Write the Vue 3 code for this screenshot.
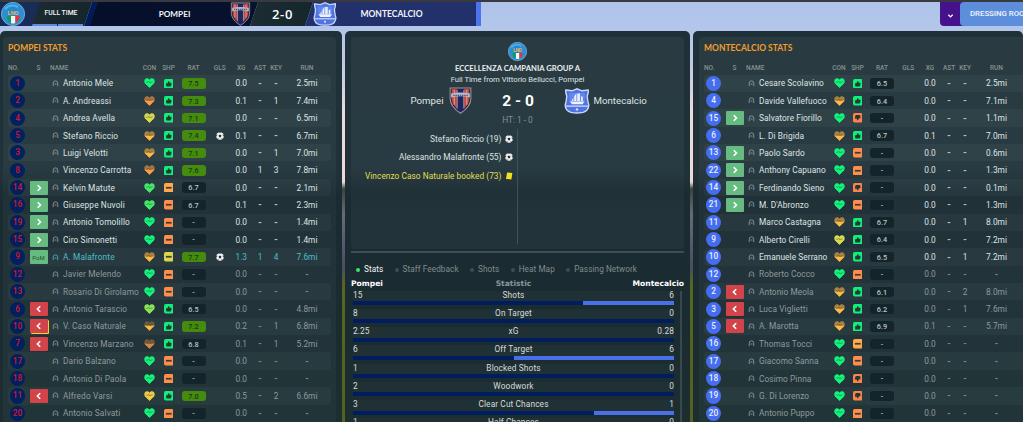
<template>
  <div class="match-screen">
    <!-- Score bar -->
    <header class="top-bar">
      <div class="league-cell">
        <svg class="league-logo" viewBox="0 0 24 24">
          <use href="#league-badge" />
        </svg>
      </div>
      <div class="time-cell">
        <span>FULL TIME</span>
        <div class="time-progress"><i></i><i></i></div>
      </div>
      <div class="home-cell">
        <span class="team-title">POMPEI</span>
      </div>
      <div class="score-cell">2-0</div>
      <div class="away-cell">
        <span class="team-title">MONTECALCIO</span>
      </div>
      <svg class="bar-crest home-crest" viewBox="0 0 22 26"><use href="#pompei-crest" /></svg>
      <svg class="bar-crest away-crest" viewBox="0 0 26 26"><use href="#monte-crest" /></svg>
      <div class="actions">
        <button class="drop-btn">
          <svg viewBox="0 0 8 6"><path d="M1.5 1.5 L4 4 L6.5 1.5" fill="none" stroke="#fff" stroke-width="1.5" /></svg>
        </button>
        <button class="room-btn">DRESSING ROOM</button>
      </div>
    </header>

    <main class="panels">
      <section
        v-for="team in teams"
        :key="team.title"
        :class="['panel', 'team-panel', team.side]"
      >
        <div class="card">
          <h2>{{ team.title }}</h2>
          <div class="grid-row grid-head">
            <span class="left">NO.</span><span>S</span><span class="name-head">NAME</span><span></span>
            <span>CON</span><span>SHP</span><span>RAT</span><span>GLS</span>
            <span>XG</span><span>AST</span><span>KEY</span><span>RUN</span>
          </div>
          <div
            v-for="p in team.players"
            :key="p.no"
            :class="['grid-row', 'player', { dim: p.dim, pom: p.sub === 'pom' }]"
          >
            <span><b class="shirt">{{ p.no }}</b></span>
            <span>
              <b v-if="p.sub === 'pom'" class="sub on pom-tag">PoM</b>
              <b v-else-if="p.sub" :class="['sub', p.sub, { booked: p.booked }]">
                <svg viewBox="0 0 8 8">
                  <path :d="p.sub === 'on' ? 'M2.7 1.2 L5.5 4 L2.7 6.8' : 'M5.2 1.2 L2.4 4 L5.2 6.8'" />
                </svg>
              </b>
            </span>
            <span>
              <svg class="person" viewBox="0 0 8 8">
                <path d="M1.4 7 V3.6 A2.6 2.6 0 0 1 6.6 3.6 V7" />
                <path d="M2.8 4.6 H5.2" />
              </svg>
            </span>
            <span class="name">{{ p.name }}</span>
            <span>
              <svg class="heart" viewBox="0 0 12 11">
                <path :fill="hearts[p.con][0]" d="M6 10.8 L1 5.8 C-.6 3.6 .6 .4 3.2 .4 C4.7 .4 5.6 1.2 6 2 C6.4 1.2 7.3 .4 8.8 .4 C11.4 .4 12.6 3.6 11 5.8 Z" />
                <path :fill="hearts[p.con][1]" d="M.5 5 L11.5 5 L11 5.8 L6 10.8 L1 5.8 Z" />
                <path d="M2.4 4.8 L4.4 4.5 L5.4 3.6 L6.5 5.5 L7.5 4.5 L9.5 4.4" fill="none" stroke="#30463e" stroke-opacity=".7" stroke-width=".7" />
              </svg>
            </span>
            <span>
              <svg class="sharp" viewBox="0 0 10 10">
                <rect width="10" height="10" rx="1.8" :fill="sharpness[p.shp]" />
                <path
                  v-if="p.shp === 'up' || p.shp === 'down'"
                  :transform="p.shp === 'down' ? 'rotate(180 5 5)' : ''"
                  d="M2.2 4.6 H3.5 L5 2 Q6.1 2 5.8 3.9 H7.8 V6.4 L7 8 H3.6 L2.2 7.5 Z"
                  fill="#22383a"
                />
                <rect v-else x="2" y="4.1" width="6" height="1.8" fill="#3b3a35" />
              </svg>
            </span>
            <span><b :class="['rating', { good: Number(p.rat) >= 7 }]">{{ p.rat }}</b></span>
            <span>
              <svg v-if="p.goal" class="ball" viewBox="0 0 10 10"><use href="#ball" /></svg>
            </span>
            <span>{{ p.xg }}</span>
            <span :class="{ dash: p.ast === '-' }">{{ p.ast }}</span>
            <span :class="{ dash: p.key === '-' }">{{ p.key }}</span>
            <span :class="{ dash: p.run === '-' }">{{ p.run }}</span>
          </div>
        </div>
      </section>

      <!-- Match summary -->
      <section class="panel centre-panel">
        <div class="card summary">
          <svg class="summary-logo" viewBox="0 0 24 24"><use href="#league-badge" /></svg>
          <h3>ECCELLENZA CAMPANIA GROUP A</h3>
          <p class="venue">Full Time from Vittorio Bellucci, Pompei</p>
          <div class="result">
            <div class="result-side home"><span>Pompei</span><svg class="crest-p" viewBox="0 0 22 26"><use href="#pompei-crest" /></svg></div>
            <strong>2 - 0</strong>
            <div class="result-side away"><svg class="crest-m" viewBox="0 0 26 26"><use href="#monte-crest" /></svg><span>Montecalcio</span></div>
          </div>
          <p class="half-time">HT: 1 - 0</p>
          <div class="events">
            <div class="home-events">
              <div v-for="e in events" :key="e.text" :class="['event', { booking: e.card }]">
                <span>{{ e.text }}</span>
                <svg v-if="e.card" viewBox="0 0 10 10"><path d="M2.6 .6 L9.2 1.4 L8 9.4 L1.2 8.6 Z" fill="#f5e11b" /></svg>
                <svg v-else viewBox="0 0 10 10"><use href="#ball" /></svg>
              </div>
            </div>
          </div>
        </div>
        <div class="divider"></div>
        <nav class="tabs">
          <a v-for="(tab, i) in tabs" :key="tab" :class="{ active: i === 0 }"><i></i>{{ tab }}</a>
        </nav>
        <div class="stat-head"><span>Pompei</span><span>Statistic</span><span>Montecalcio</span></div>
        <div class="stat-scroll">
          <div class="stat-list">
            <div v-for="s in stats" :key="s.label" class="stat">
              <div class="stat-text"><span>{{ s.home }}</span><span>{{ s.label }}</span><span>{{ s.away }}</span></div>
              <div class="stat-bar"><i :style="{ width: s.share + '%' }"></i></div>
            </div>
          </div>
          <div class="scroll-track"></div>
        </div>
      </section>
    </main>

    <!-- Shared badges -->
    <svg class="defs" width="0" height="0">
      <symbol id="league-badge" viewBox="0 0 24 24">
        <circle cx="12" cy="12" r="11.6" fill="#2b8fd6" stroke="#8fb6d2" stroke-width=".8" />
        <path d="M4 7 Q9 1 17 5" fill="none" stroke="#46b6ee" stroke-width="2" />
        <circle cx="12" cy="10.4" r="5.6" fill="#2a86c6" />
        <path d="M5.6 14 H10 V21 Q5.8 19 5.6 14" fill="#119a55" />
        <path d="M10 14 H14.4 V21 Q12 22 10 21Z" fill="#f3f5f1" />
        <path d="M14.4 14 H19 Q18.6 19 14.4 21Z" fill="#e43636" />
        <text x="12" y="12.6" text-anchor="middle" font-size="5.8" font-weight="700" fill="#e9b45a">LND</text>
      </symbol>
      <symbol id="pompei-crest" viewBox="0 0 22 26">
        <path d="M1 1 H21 V11 C21 18 16 22 11 25.3 C6 22 1 18 1 11 Z" fill="#20265a" stroke="#a0979c" stroke-width="1" />
        <path d="M2.5 2 H7.5 V20.5 C4.5 18 2.5 15 2.5 11Z M14.5 2 H19.5 V11 C19.5 15 17.5 18 14.5 20.5Z" fill="#c84436" />
        <path d="M5 3 V17 M17 3 V17" stroke="#d9a18e" stroke-width="1" />
        <path d="M7.8 3 V20.8 M14.2 3 V20.8" stroke="#a6a6bd" stroke-width=".9" />
        <path d="M2 6.3 Q11 4.3 20 6.3 V10 Q11 8 2 10Z" fill="#b5bad0" />
        <path d="M4 8 H18" stroke="#4c5681" stroke-width="1.2" stroke-dasharray="1.4 .7" />
      </symbol>
      <symbol id="monte-crest" viewBox="0 0 26 26">
        <path d="M1.8 2 L8 2.8 L13 .8 L18 2.8 L24.2 2 Q24.6 5 23.2 8 Q23.6 13 24.8 17 Q24.6 23 19 24.4 Q13 25.6 7 24.4 Q1.4 23 1.2 17 Q2.4 13 2.8 8 Q1.4 5 1.8 2Z" fill="#4f74e0" stroke="#cbd7fa" stroke-width="1.4" />
        <path d="M5 5 H21 L20.5 15 H5.5Z" fill="#6287eb" />
        <path d="M12.4 5.5 V13 H10.2 V8 Z M13.2 5.5 H16 V13 H13.2Z M17 8.5 H18.8 V13 H17Z M9.4 9.5 V13 H7.6 Z" fill="#e8edff" />
        <path d="M6 13.4 H20.5 L18.6 16.2 H8Z" fill="#eef2ff" />
        <path d="M2 18.2 H24" stroke="#d4defd" stroke-width="1.2" />
        <circle cx="13" cy="21.4" r="1.2" fill="#dbe4ff" />
      </symbol>
      <symbol id="ball" viewBox="0 0 10 10">
        <circle cx="5" cy="5" r="4.7" fill="#f3f4f2" />
        <path d="M5 3.2 L6.8 4.5 L6.1 6.5 H3.9 L3.2 4.5Z M0 4 L1.6 2.9 L1.2 5.6Z M10 4 L8.4 2.9 L8.8 5.6Z M3.8 .4 H6.2 L5 1.6Z M2 9 L2.2 7.4 L3.7 8.8Z M8 9 L7.8 7.4 L6.3 8.8Z" fill="#233338" />
      </symbol>
    </svg>
  </div>
</template>

<script setup>
// top colour, bottom colour (tired players have a dull top half)
const hearts = {
  g: ['#11f47b', '#11f47b'],
  m: ['#42e86a', '#42e86a'],
  l: ['#8be456', '#8be456'],
  y: ['#d9d84f', '#d9d84f'],
  a: ['#efca45', '#efca45'],
  o: ['#a9823f', '#ffb841'],
  r: ['#a57643', '#ff9b46'],
  d: ['#685a3d', '#ffb83c'],
  x: ['#74573d', '#d9873f']
}

const sharpness = {
  up: '#12ef77',
  down: '#ff814b',
  mid: '#ff8e4c',
  amber: '#ffa94a',
  yellow: '#d8d54f'
}

const tabs = ['Stats', 'Staff Feedback', 'Shots', 'Heat Map', 'Passing Network']

const toPlayer = ([no, name, con, shp, rat, xg, ast, key, run, sub = '', extra = '']) => ({
  no, name, con, shp, rat, xg, ast, key, run, sub,
  goal: extra.includes('goal'),
  dim: extra.includes('dim'),
  booked: extra.includes('booked')
})

const home = [
  [1, 'Antonio Mele', 'g', 'up', '7.5', '0.0', '-', '-', '2.5mi'],
  [2, 'A. Andreassi', 'r', 'up', '7.3', '0.1', '-', '1', '7.4mi'],
  [4, 'Andrea Avella', 'y', 'up', '7.1', '0.0', '-', '-', '6.5mi'],
  [5, 'Stefano Riccio', 'o', 'up', '7.4', '0.1', '-', '-', '6.7mi', '', 'goal'],
  [3, 'Luigi Velotti', 'o', 'up', '7.1', '0.0', '-', '1', '7.0mi'],
  [8, 'Vincenzo Carrotta', 'r', 'up', '7.6', '0.0', '1', '3', '7.8mi'],
  [14, 'Kelvin Matute', 'm', 'amber', '6.7', '0.0', '-', '-', '2.1mi', 'on'],
  [16, 'Giuseppe Nuvoli', 'm', 'mid', '6.7', '0.1', '-', '-', '2.3mi', 'on'],
  [19, 'Antonio Tomolillo', 'g', 'mid', '-', '0.0', '-', '-', '1.4mi', 'on'],
  [15, 'Ciro Simonetti', 'g', 'mid', '-', '0.0', '-', '-', '1.4mi', 'on'],
  [9, 'A. Malafronte', 'o', 'yellow', '7.7', '1.3', '1', '4', '7.6mi', 'pom', 'goal'],
  [12, 'Javier Melendo', 'g', 'mid', '-', '0.0', '-', '-', '-', '', 'dim'],
  [13, 'Rosario Di Girolamo', 'g', 'mid', '-', '0.0', '-', '-', '-', '', 'dim'],
  [6, 'Antonio Tarascio', 'l', 'up', '6.5', '0.0', '-', '-', '4.8mi', 'off', 'dim'],
  [10, 'V. Caso Naturale', 'd', 'up', '7.2', '0.2', '-', '1', '6.8mi', 'off', 'dim booked'],
  [7, 'Vincenzo Marzano', 'x', 'up', '6.8', '0.1', '-', '1', '5.2mi', 'off', 'dim'],
  [17, 'Dario Balzano', 'g', 'mid', '-', '0.0', '-', '-', '-', '', 'dim'],
  [18, 'Antonio Di Paola', 'g', 'mid', '-', '0.0', '-', '-', '-', '', 'dim'],
  [11, 'Alfredo Varsi', 'a', 'up', '7.0', '0.5', '-', '2', '6.6mi', 'off', 'dim'],
  [20, 'Antonio Salvati', 'g', 'mid', '-', '0.0', '-', '-', '-', '', 'dim']
]

const away = [
  [1, 'Cesare Scolavino', 'g', 'up', '6.5', '0.0', '-', '-', '2.5mi'],
  [4, 'Davide Vallefuoco', 'o', 'up', '6.4', '0.0', '-', '-', '7.1mi'],
  [15, 'Salvatore Fiorillo', 'g', 'down', '-', '0.0', '-', '-', '1.1mi', 'on'],
  [6, 'L. Di Brigida', 'o', 'up', '6.7', '0.1', '-', '-', '7.0mi'],
  [13, 'Paolo Sardo', 'g', 'mid', '-', '0.0', '-', '-', '0.6mi', 'on'],
  [22, 'Anthony Capuano', 'g', 'mid', '-', '0.0', '-', '-', '1.3mi', 'on'],
  [14, 'Ferdinando Sieno', 'g', 'down', '-', '0.0', '-', '-', '0.1mi', 'on'],
  [21, "M. D'Abronzo", 'g', 'mid', '-', '0.0', '-', '-', '1.3mi', 'on'],
  [11, 'Marco Castagna', 'o', 'up', '6.7', '0.0', '-', '1', '8.0mi'],
  [9, 'Alberto Cirelli', 'y', 'up', '6.4', '0.0', '-', '-', '7.2mi'],
  [10, 'Emanuele Serrano', 'o', 'up', '6.5', '0.0', '-', '1', '7.2mi'],
  [12, 'Roberto Cocco', 'g', 'mid', '-', '0.0', '-', '-', '-', '', 'dim'],
  [2, 'Antonio Meola', 'o', 'up', '6.1', '0.0', '-', '2', '8.0mi', 'off', 'dim'],
  [3, 'Luca Viglietti', 'o', 'up', '6.2', '0.0', '-', '1', '7.6mi', 'off', 'dim'],
  [5, 'A. Marotta', 'o', 'up', '6.9', '0.1', '-', '-', '5.7mi', 'off', 'dim'],
  [16, 'Thomas Tocci', 'g', 'amber', '-', '0.0', '-', '-', '-', '', 'dim'],
  [17, 'Giacomo Sanna', 'g', 'mid', '-', '0.0', '-', '-', '-', '', 'dim'],
  [18, 'Cosimo Pinna', 'g', 'down', '-', '0.0', '-', '-', '-', '', 'dim'],
  [19, 'G. Di Lorenzo', 'g', 'down', '-', '0.0', '-', '-', '-', '', 'dim'],
  [20, 'Antonio Puppo', 'g', 'mid', '-', '0.0', '-', '-', '-', '', 'dim']
]

const teams = [
  { side: 'home', title: 'POMPEI STATS', players: home.map(toPlayer) },
  { side: 'away', title: 'MONTECALCIO STATS', players: away.map(toPlayer) }
]

const events = [
  { text: 'Stefano Riccio (19)' },
  { text: 'Alessandro Malafronte (55)' },
  { text: 'Vincenzo Caso Naturale booked (73)', card: true }
]

// share = width of the away bar
const stats = [
  { label: 'Shots', home: '15', away: '6', share: 28.5 },
  { label: 'On Target', home: '8', away: '0', share: 0 },
  { label: 'xG', home: '2.25', away: '0.28', share: 0 },
  { label: 'Off Target', home: '6', away: '6', share: 50 },
  { label: 'Blocked Shots', home: '1', away: '0', share: 0 },
  { label: 'Woodwork', home: '2', away: '0', share: 0 },
  { label: 'Clear Cut Chances', home: '3', away: '1', share: 25 },
  { label: 'Half Chances', home: '1', away: '0', share: 0 }
]
</script>

<style>
body {
  margin: 0;
  overflow: hidden;
}
</style>

<style scoped>
* {
  box-sizing: border-box;
}

.match-screen {
  position: relative;
  width: 1023px;
  height: 422px;
  overflow: hidden;
  display: flex;
  flex-direction: column;
  border-top: 2px solid #393a40;
  font-family: Roboto, "Liberation Sans", sans-serif;
  font-size: 8.3px;
  color: #dfe4e4;
  background: linear-gradient(#afc3ea 0, #b4c6ea 30px, #c5c9e2 65px, #eadbdc 110px, #ecd9d7 180px, #38443c 187px, #656c77 212px, #484e61 265px, #58661f 283px, #536020 100%);
}

.defs {
  position: absolute;
}

h2, h3, p {
  margin: 0;
}

/* Score bar */
.top-bar {
  display: flex;
  height: 24px;
  margin-bottom: 5px;
  position: relative;
  flex: none;
}

.league-cell {
  width: 40px;
  background: #172d58;
  padding-left: 1px;
}

.league-logo {
  width: 24px;
  height: 24px;
  display: block;
}

.time-cell {
  width: 60px;
  margin-left: -8px;
  background: linear-gradient(90deg, #1c2b32, #14252b);
  clip-path: polygon(8px 0, 100% 0, 52px 100%, 0 100%);
  color: #f4f6f7;
  font-size: 6.8px;
  font-weight: 500;
  text-align: center;
  line-height: 22px;
}

.time-cell span {
  margin-left: -2px;
}

.time-progress {
  display: flex;
  gap: 1px;
}

.time-progress i {
  width: 25px;
  height: 2px;
  background: #5c8bdf;
}

.home-cell {
  width: 174px;
  margin-left: -8px;
  text-align: center;
  line-height: 25px;
  clip-path: polygon(8px 0, 100% 0, 166px 100%, 0 100%);
  background: linear-gradient(108deg, #001b55 0, #001b55 13px, #060f29 13px, #07122f 100%);
}

.home-cell .team-title {
  margin-left: 7px;
  font-size: 8.2px;
}

.team-title {
  font-family: Lato, sans-serif;
  font-size: 8.5px;
  font-weight: 700;
  color: #f1f3f7;
}

.score-cell {
  width: 63px;
  margin-left: -8px;
  padding-left: 2px;
  clip-path: polygon(8px 0, 100% 0, 55px 100%, 0 100%);
  background: linear-gradient(90deg, #1b2c32, #15272c);
  color: #fff;
  font-family: "Open Sans", sans-serif;
  font-size: 13px;
  font-weight: 600;
  text-align: center;
  line-height: 24px;
  letter-spacing: .7px;
}

.away-cell {
  width: 176px;
  margin-left: -8px;
  padding-left: 2px;
  background: #22316c;
  border-right: 5px solid #4c73ed;
  text-align: center;
  line-height: 25px;
  clip-path: polygon(8px 0, 100% 0, 100% 100%, 0 100%);
}

/* Crests sit across the slanted edges */
.bar-crest {
  position: absolute;
  top: 0;
  height: 24px;
}

.home-crest {
  left: 230px;
  width: 21px;
}

.away-crest {
  left: 312px;
  width: 26px;
}

.actions {
  margin-left: auto;
  width: 83px;
  display: flex;
  overflow: hidden;
  border-radius: 0 0 0 4px;
  background: #45128c;
}

.actions button {
  border: 0;
  padding: 0;
  color: #f1f6ff;
  flex: none;
}

.drop-btn {
  width: 20px;
  background: none;
}

.drop-btn svg {
  width: 7px;
  height: 6px;
}

.actions .room-btn {
  width: 90px;
  padding-left: 10px;
  text-align: left;
  background: #5c8edc;
  border-radius: 4px 0 0 4px;
  font: 500 7.8px/24px Roboto, sans-serif;
  white-space: nowrap;
}

/* Panels */
.panels {
  display: flex;
  gap: 3px;
  height: 391px;
}

.panel {
  background: linear-gradient(#1f3138 0, #203238 145px, #1a2b31 165px, #1a2b31 245px, #1d2e31 100%);
  border-radius: 5px 5px 0 0;
  padding-top: 6px;
  overflow: hidden;
  flex: none;
}

.card {
  background: linear-gradient(#293b41 0, #293b42 130px, #203137 158px, #223339 230px, #213538 100%);
  border-radius: 4px;
}

.team-panel.home {
  order: 1;
  width: 342px;
  padding-left: 3px;
}

.centre-panel {
  order: 2;
  width: 345px;
  padding-left: 6px;
}

.team-panel.away {
  order: 3;
  width: 330px;
  padding-left: 6px;
}

.team-panel .card {
  width: 333px;
  height: 390px;
  padding: 5px 5px 0;
}

.team-panel h2 {
  font: 700 8.5px/12px Lato, sans-serif;
  color: #f29d2c;
  height: 19.5px;
}

.grid-row {
  display: grid;
  grid-template-columns: 19px 23px 11px 79px 19px 19px 31px 21.5px 21.5px 16px 16px 46px;
  align-items: center;
  height: 17.37px;
  border-radius: 3px;
  white-space: nowrap;
}

.away .grid-row {
  grid-template-columns: 19px 23px 11px 72.5px 19px 18px 31px 21.5px 22px 16px 16px 47px;
}

.grid-row > span {
  display: flex;
  justify-content: center;
  align-items: center;
}

.grid-row > .name {
  justify-content: flex-start;
  padding-left: 2px;
  letter-spacing: .13px;
}

.away .grid-row > .name {
  letter-spacing: .08px;
}

.grid-row > .left,
.grid-row > .name-head {
  justify-content: flex-start;
}

.grid-head {
  height: 13.2px;
  font-size: 6.5px;
  font-weight: 500;
  color: #87928f;
}

.player {
  padding-top: .2px;
}

.player:nth-child(odd) {
  background: rgba(130, 165, 170, .065);
}

.player.dim {
  color: #8f999b;
}

.player.pom {
  color: #4dbccd;
}

.player .dash {
  font-size: 10px;
  font-weight: 500;
  opacity: .8;
}

.shirt {
  width: 15.2px;
  height: 15.2px;
  border-radius: 50%;
  background: #00205f;
  color: #d21928;
  font-weight: 500;
  text-align: center;
  line-height: 15.6px;
}

.away .shirt {
  background: #456df0;
  color: #e8efff;
}

.sub {
  width: 18px;
  height: 14px;
  border-radius: 1px;
  display: flex;
  align-items: center;
  justify-content: center;
  background: #66bb80;
}

.sub.off {
  background: #d3434a;
}

.sub.booked {
  box-shadow: 1px 1px 0 #efd329;
}

.sub svg {
  width: 8px;
  height: 8px;
  fill: none;
  stroke: #fff;
  stroke-width: 1.6;
}

.pom-tag {
  font-size: 6px;
  font-weight: 400;
  color: #23503b;
}

.person {
  width: 7px;
  height: 7px;
  fill: none;
  stroke: #9aa5a8;
  stroke-width: .9;
}

.pom .person {
  stroke: #4dbccd;
}

.heart {
  width: 11px;
  height: 10px;
}

.sharp {
  width: 9.5px;
  height: 9.5px;
}

.rating {
  width: 24px;
  height: 10.5px;
  border-radius: 3px;
  background: #13242a;
  color: #bcc5c7;
  font-size: 7.3px;
  font-weight: 500;
  line-height: 11px;
  text-align: center;
}

.rating.good {
  background: #458b0d;
  color: #193b15;
}

.ball {
  width: 8px;
  height: 8px;
}

/* Match summary */
.summary {
  width: 333px;
  height: 212px;
  display: flex;
  flex-direction: column;
  align-items: center;
  padding-top: 5px;
  background: linear-gradient(#293b41 0, #293b42 130px, #203137 155px, #22343a 175px, #223339 100%);
}

.summary-logo {
  width: 19px;
  height: 19px;
}

.summary h3 {
  font: 700 7.7px/11px Lato, sans-serif;
  margin-top: 2px;
  color: #e9edee;
}

.venue {
  font-size: 7.65px;
  line-height: 12.5px;
}

.result {
  display: flex;
  width: 333px;
  height: 28px;
  align-items: center;
  font-size: 9.7px;
}

.result strong {
  width: 55px;
  text-align: center;
  font-size: 15.5px;
  margin-left: -2px;
  color: #fff;
}

.result-side {
  flex: 1;
  display: flex;
  align-items: center;
  gap: 5px;
}

.result-side.home {
  justify-content: flex-end;
  padding-right: 21px;
}

.result-side.away {
  padding-left: 18px;
  gap: 4px;
}

.crest-p {
  width: 23px;
  height: 27px;
}

.crest-m {
  width: 26px;
  height: 26px;
}

.half-time {
  color: #839095;
  line-height: 10px;
}

.events {
  width: 333px;
  height: 115px;
  margin-top: 4.8px;
  background: linear-gradient(90deg, transparent 166px, #405159 166px, #405159 167px, transparent 167px);
}

.home-events {
  width: 161.5px;
}

.event {
  height: 18.6px;
  display: flex;
  justify-content: flex-end;
  align-items: center;
  gap: 3px;
  font-size: 8.3px;
  letter-spacing: .05px;
}

.event svg {
  width: 8px;
  height: 8px;
}

.event.booking {
  color: #e1df54;
}

.divider {
  width: 333px;
  height: 1.5px;
  margin-top: 2px;
  background: #3e4e51;
}

.tabs {
  display: flex;
  height: 27px;
  margin-top: 3.5px;
  padding-left: 5px;
  gap: 11.3px;
  color: #818b8d;
  line-height: 27px;
  font-size: 8.2px;
  letter-spacing: .08px;
}

.tabs a {
  display: flex;
  align-items: center;
  gap: 4px;
}

.tabs i {
  width: 4px;
  height: 4px;
  border-radius: 50%;
  background: #454b4a;
}

.tabs .active {
  color: #f0f3f3;
}

.tabs .active i {
  background: #39e566;
}

.stat-head {
  width: 333px;
  height: 9px;
  margin-top: -4.5px;
  display: grid;
  grid-template-columns: 1fr auto 1fr;
  font: 700 7.6px/9px "DejaVu Sans", sans-serif;
  color: #fff;
}

.stat-head span:nth-child(2) {
  color: #8a9698;
  margin-left: -8px;
}

.stat-head span:last-child {
  text-align: right;
}

.stat-scroll {
  display: flex;
  justify-content: space-between;
  width: 331px;
  margin-top: 3px;
}

.stat-list {
  width: 323px;
  flex: none;
}

.stat {
  height: 18.25px;
  padding: 0 0 0 2px;
}

.stat-text {
  display: grid;
  grid-template-columns: 1fr auto 1fr;
  height: 10.5px;
  line-height: 9.6px;
  background: #1f3134;
  color: #d7dcdc;
  letter-spacing: .12px;
}

.stat-text span:last-child {
  text-align: right;
}

.stat-bar {
  height: 4px;
  background: #001d60;
  display: flex;
  justify-content: flex-end;
}

.stat-bar i {
  background: #4970e9;
}

.scroll-track {
  width: 2px;
  background: #36494d;
}
</style>
